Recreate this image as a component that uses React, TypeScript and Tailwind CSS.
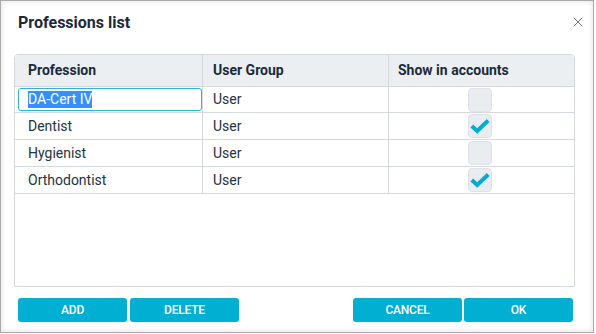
import { X } from 'lucide-react';

const rows = [
  { name: 'DA-Cert IV', group: 'User', show: false, editing: true },
  { name: 'Dentist', group: 'User', show: true },
  { name: 'Hygienist', group: 'User', show: false },
  { name: 'Orthodontist', group: 'User', show: true },
];

function CheckBox({ checked }: { checked: boolean }) {
  return (
    <div className="w-[24px] h-[24px] rounded-[4px] bg-[#e9ecf1] border border-[#dde1e7] flex items-center justify-center">
      {checked && (
        <svg width="20" height="16" viewBox="0 0 20 16">
          <path d="M1.8 8 L7.2 13 L18.2 2.5" fill="none" stroke="#04acd0" strokeWidth="4" strokeLinejoin="miter" />
        </svg>
      )}
    </div>
  );
}

function Btn({ label }: { label: string }) {
  return (
    <button className="w-[109px] h-[24px] rounded-[3px] bg-[#00afd2] text-white text-[12px] font-medium tracking-[-0.2px] flex items-center justify-center">
      {label}
    </button>
  );
}

export default function App() {
  return (
    <div className="w-[596px] h-[334px] bg-white font-['Roboto',sans-serif]">
      <div className="w-[594px] h-[333px] border border-[#a9a9a9] shadow-[inset_0_0_6px_rgba(0,0,0,0.12)] flex flex-col">
        <div className="h-[53px] flex items-start justify-between pl-[17px] pr-[7px] pt-[11px]">
          <h1 className="text-[16px] font-bold text-[#1b2a3a] leading-[22px]">Professions list</h1>
          <X className="w-[16px] h-[16px] text-[#3d4754] mt-[2px]" strokeWidth={1.1} />
        </div>
        <div className="ml-[13px] w-[561px] h-[233px] border border-[#d5d9de] rounded-t-[4px] overflow-hidden">
          <div className="grid grid-cols-[188px_186px_1fr] h-[32px] bg-[#ebeff2] border-b border-[#d5d9de] text-[14px] font-bold text-[#1b2a3a]">
            <div className="border-r border-[#d5d9de] flex items-center pl-[13px]">Profession</div>
            <div className="border-r border-[#d5d9de] flex items-center pl-[10px]">User Group</div>
            <div className="flex items-center pl-[9px]">Show in accounts</div>
          </div>
          {rows.map((r, i) => (
            <div
              key={r.name}
              className={`grid grid-cols-[188px_186px_1fr] ${i === 0 ? 'h-[26px]' : 'h-[27px]'} border-b border-[#d5d9de] text-[14px] text-[#26323f]`}
            >
              <div className="border-r border-[#d5d9de] flex items-center pl-[3px]">
                {r.editing ? (
                  <div className="w-[185px] h-[23px] border border-[#2fb4d1] rounded-[3px] flex items-center pl-[9px]">
                    <span className="bg-[#3390ff] text-white leading-[17px]">{r.name}</span>
                  </div>
                ) : (
                  <span className="pl-[10px]">{r.name}</span>
                )}
              </div>
              <div className="border-r border-[#d5d9de] flex items-center pl-[10px]">{r.group}</div>
              <div className="flex items-center justify-center pr-[3px]">
                <CheckBox checked={r.show} />
              </div>
            </div>
          ))}
        </div>
        <div className="flex justify-between pl-[17px] pr-[20px] mt-[11px]">
          <div className="flex gap-[3px]">
            <Btn label="ADD" />
            <Btn label="DELETE" />
          </div>
          <div className="flex gap-[2px]">
            <Btn label="CANCEL" />
            <Btn label="OK" />
          </div>
        </div>
      </div>
    </div>
  );
}
